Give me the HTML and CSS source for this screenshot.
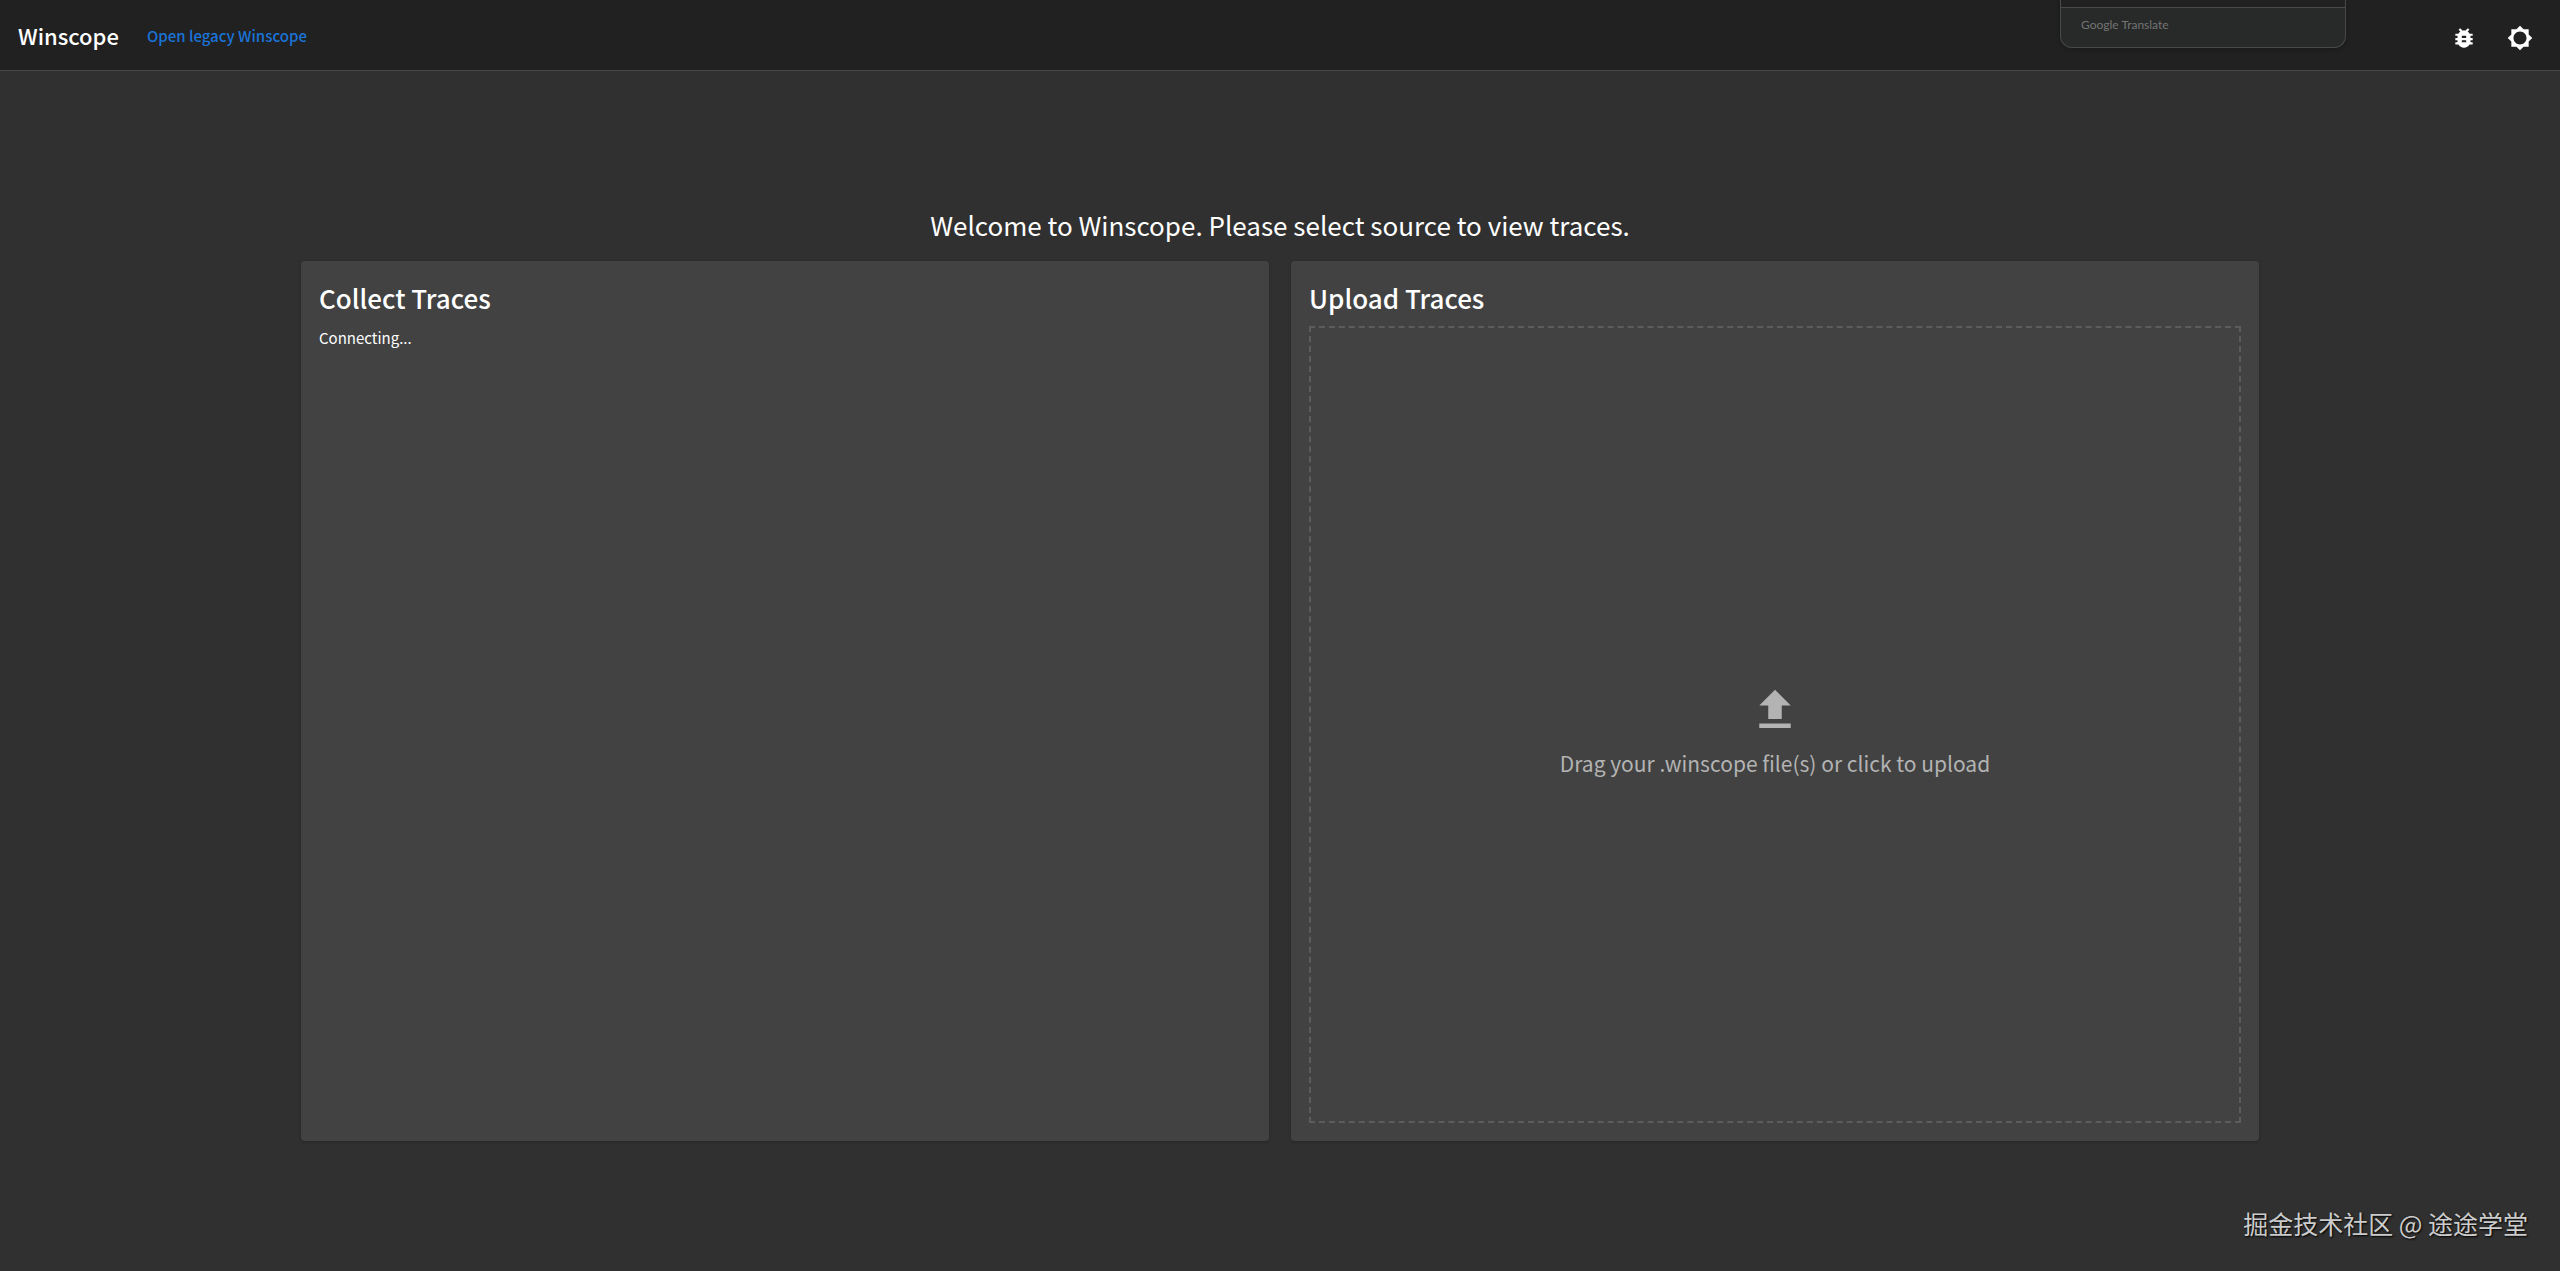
FILE: index.html
```html
<!DOCTYPE html>
<html lang="en">

<head>
	<meta charset="utf-8">
	<title>Winscope</title>
	<link rel="stylesheet" href="styles.css">
</head>

<body>
	<header class="toolbar">
		<span class="app-title">Winscope</span>
		<a class="legacy-link" href="#">Open legacy Winscope</a>
		<div class="actions">
			<button class="icon-button" aria-label="Report bug">
				<svg viewBox="0 0 24 24"><path d="M20 8h-2.81c-.45-.78-1.07-1.45-1.82-1.96L17 4.41 15.59 3l-2.17 2.17C12.96 5.06 12.49 5 12 5c-.49 0-.96.06-1.41.17L8.41 3 7 4.41l1.62 1.63C7.88 6.55 7.26 7.22 6.81 8H4v2h2.09c-.05.33-.09.66-.09 1v1H4v2h2v1c0 .34.04.67.09 1H4v2h2.81c1.04 1.79 2.97 3 5.19 3s4.15-1.21 5.19-3H20v-2h-2.09c.05-.33.09-.66.09-1v-1h2v-2h-2v-1c0-.34-.04-.67-.09-1H20V8zm-6 8h-4v-2h4v2zm0-4h-4v-2h4v2z"/></svg>
			</button>
			<button class="icon-button" aria-label="Switch theme">
				<svg viewBox="0 0 24 24"><path d="M20 15.31L23.31 12 20 8.69V4h-4.69L12 .69 8.69 4H4v4.69L.69 12 4 15.31V20h4.69L12 23.31 15.31 20H20v-4.69zM12 18c-3.31 0-6-2.69-6-6s2.69-6 6-6 6 2.69 6 6-2.69 6-6 6z"/></svg>
			</button>
		</div>
		<div class="translate-popup">Google Translate</div>
	</header>
	<main class="home">
		<h1 class="welcome">Welcome to Winscope. Please select source to view traces.</h1>
		<div class="cards">
			<section class="card">
				<h2>Collect Traces</h2>
				<p class="status">Connecting...</p>
			</section>
			<section class="card">
				<h2>Upload Traces</h2>
				<label class="drop-box" for="upload">
					<svg viewBox="0 0 24 24"><path d="M9 16h6v-6h4l-7-7-7 7h4zm-4 2h14v2H5z"/></svg>
					<span>Drag your .winscope file(s) or click to upload</span>
				</label>
				<input class="file-input" type="file" id="upload" multiple>
			</section>
		</div>
	</main>
	<div class="watermark" lang="zh">掘金技术社区 @ 途途学堂</div>
</body>

</html>
```

FILE: styles.css
```css
body {
	display: flex;
	flex-direction: column;
	min-height: 100vh;
	margin: 0;
	background: #303030;
	color: #fff;
	font-family: "Noto Sans CJK SC", sans-serif;
	font-size: 15px;
}

h1,
h2,
p {
	margin: 0;
}

.toolbar {
	position: relative;
	display: flex;
	align-items: center;
	height: 70px;
	padding: 0 18px;
	background: #212121;
	border-bottom: 1px solid #484848;
}

.app-title {
	font-size: 22px;
	font-weight: 500;
	line-height: 36px;
}

.legacy-link {
	margin-left: 28px;
	color: #1a73d8;
	font-weight: 500;
	text-decoration: none;
}

.actions {
	display: flex;
	gap: 12px;
	margin-left: auto;
	padding-top: 5px;
}

.icon-button {
	display: flex;
	align-items: center;
	justify-content: center;
	width: 44px;
	height: 44px;
	padding: 0;
	border: 0;
	background: none;
	cursor: pointer;
}

.icon-button svg {
	width: 26px;
	height: 26px;
	fill: #fff;
}

/* tail end of the translate bubble, hangs over the toolbar */
.translate-popup {
	position: absolute;
	top: 0;
	right: 214px;
	box-sizing: border-box;
	width: 286px;
	height: 48px;
	padding-left: 20px;
	border: 1px solid #484a49;
	border-top: 0;
	border-radius: 0 0 12px 12px;
	background: linear-gradient(#212121 7px, #484a49 7px, #484a49 8px, #282929 8px);
	box-shadow: 0 1px 4px #1a1a1a;
	color: #737574;
	font-family: Lato, sans-serif;
	font-size: 12px;
	line-height: 50px;
}

.home {
	display: flex;
	flex: 1;
	flex-direction: column;
	box-sizing: border-box;
	width: 80%;
	margin: 0 auto;
	padding: 132px 45px 130px;
}

.welcome {
	margin-bottom: 14px;
	font-size: 26px;
	font-weight: 400;
	line-height: 44px;
	text-align: center;
}

.cards {
	display: grid;
	flex: 1;
	grid-template-columns: 1fr 1fr;
	gap: 22px;
}

.card {
	display: flex;
	flex-direction: column;
	padding: 17px 18px 18px;
	border-radius: 4px;
	background: #424242;
	box-shadow: 0 1px 3px #262626;
}

.card h2 {
	margin-bottom: 8px;
	font-size: 26px;
	font-weight: 500;
	line-height: 40px;
}

.status {
	line-height: 24px;
}

.drop-box {
	display: flex;
	flex: 1;
	flex-direction: column;
	align-items: center;
	justify-content: center;
	padding-top: 14px;
	border: 2px dashed #5c5c5c;
	color: #b3b3b3;
	font-size: 21px;
	line-height: 36px;
	cursor: pointer;
}

.drop-box svg {
	width: 54px;
	height: 54px;
	margin-bottom: 8px;
	fill: #b3b3b3;
}

.file-input {
	display: none;
}

.watermark {
	position: absolute;
	right: 32px;
	bottom: 30px;
	color: #ccc;
	font-size: 25px;
	line-height: 36px;
	text-shadow: 1px 1px 2px #000;
}
```
